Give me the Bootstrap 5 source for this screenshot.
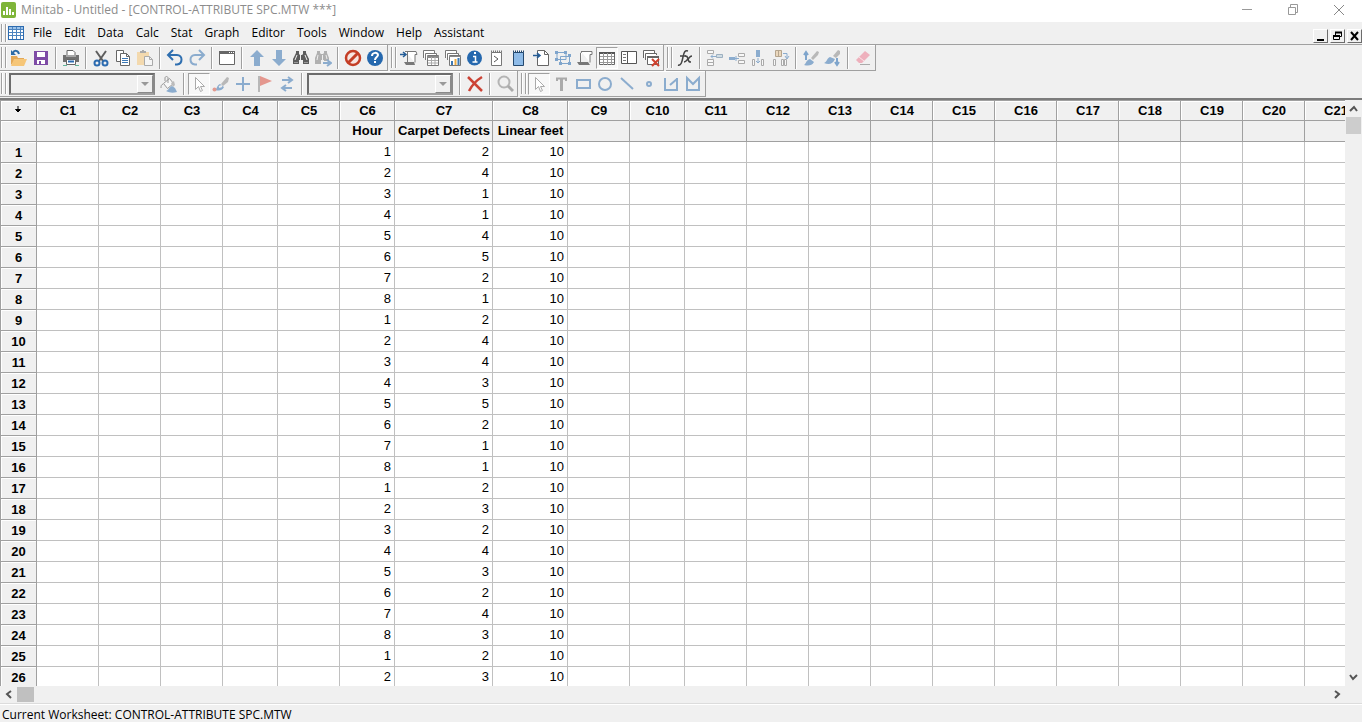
<!DOCTYPE html>
<html lang="en">
<head>
<meta charset="utf-8">
<meta name="viewport" content="width=device-width, initial-scale=1">
<title>Minitab - Untitled</title>
<link href="https://cdn.jsdelivr.net/npm/bootstrap@5.3.0/dist/css/bootstrap.min.css" rel="stylesheet">
<script src="https://cdn.jsdelivr.net/npm/bootstrap@5.3.0/dist/js/bootstrap.bundle.min.js"></script>
<style>
:root{--face:#f0f0f0;--edge:#a0a0a0}
body{font-family:"Open Sans","Noto Sans",sans-serif;font-size:12px;line-height:16px;color:#000;background:var(--face)}
button{border:0;padding:0;background:none;color:inherit}
svg{display:block;fill:none}
.titlebar{height:22px;background:#fff;color:#8c8c8c;padding-bottom:2px}
.wincap{width:46px;height:18px}
.menubar{height:23px;border-bottom:1px solid var(--edge)}
.menubar .menu-item{color:#000;text-decoration:none;padding:0 6px}
.child-btns{gap:2px;padding-bottom:1px}
.grip{width:8px;align-self:stretch;flex:none;padding:2px 0 2px 1px;gap:2px}
.grip i{width:2px;border-left:1px solid var(--edge);background:#fff}
.tool-group{height:26px;border-right:1px solid var(--edge);border-bottom:1px solid var(--edge);padding-right:1px;box-shadow:inset 0 1px #fff}
.tool{width:22px;height:22px;flex:none;display:flex;align-items:center;justify-content:center}
.tool.pressed{background:#f8f8f8;border:1px solid;border-color:var(--edge) #fff #fff var(--edge)}
.divider{width:8px;height:22px;flex:none;padding-left:3px}
.divider::before{content:"";display:block;width:2px;height:100%;background:var(--edge);border-right:1px solid #fff}
.combo{width:146px;height:22px;margin:0 3px 0 1px;position:relative;flex:none}
.combo select{appearance:none;width:100%;height:100%;background:var(--face);border:2px solid;border-color:#6c6c6c #8a8a8a #a0a0a0 #6c6c6c;border-radius:0}
.combo span{position:absolute;right:2px;top:2px;bottom:2px;width:16px;border:1px solid;border-color:#fff #8a8a8a #8a8a8a #fff;pointer-events:none;display:flex;align-items:center;justify-content:center}
.child-btn{width:15px;height:14px;background:var(--face);border:1px solid;border-color:#fff #6c6c6c #6c6c6c #fff;display:flex;align-items:center;justify-content:center}
.sheet-frame{border-top:2px solid #7c7c7c;margin-top:1px;min-height:0}
.sheet-view{overflow:hidden;background:#fff;min-width:0}
.sheet{table-layout:fixed;width:0;border-collapse:separate;border-spacing:0;font:13px/18px "Liberation Sans",Arial,sans-serif}
.sheet col{width:62px}.sheet col.row-no{width:37px}.sheet col.w55{width:55px}.sheet col.w98{width:98px}.sheet col.w75{width:75px}
.sheet th,.sheet td{height:21px;padding:0 3px;border:0 solid #c0c0c0;border-width:0 1px 1px 0;text-align:right;white-space:nowrap;overflow:hidden}
.sheet th{background:var(--face);border-color:var(--edge);text-align:center;padding:0 0 0 1px}
.sheet th.num{border-left-width:1px;box-shadow:inset 1px 1px #fff;padding:1px 0 0}
.sheet thead tr:first-child th{border-top-width:1px;box-shadow:inset 1px 1px #fff}
.sheet thead tr:first-child th.num{padding:0 2px 2px 0}
.vbar{width:17px;flex:none}
.vbar .thumb{width:15px;height:17px;background:#cdcdcd}
.hbar{height:17px;flex:none}
.hbar .thumb{width:17px;height:15px;background:#c0c0c0}
.arrow-btn{width:17px;height:17px;display:flex;align-items:center;justify-content:center}
.status{line-height:14px;border-top:1px solid #dcdcdc;box-shadow:inset 0 1px #fff;padding:4px 2px 0;flex:none;white-space:nowrap}
</style>
</head>
<body class="vh-100 d-flex flex-column overflow-hidden">
<header class="titlebar d-flex align-items-center flex-shrink-0">
  <svg width="17" height="16" viewBox="0 0 17 16" class="me-1"><rect x="1" width="15" height="16" rx="2" fill="#7fb539"/><path d="M4 9v4M7 5v8M10 7v6M13 10v3" stroke="#fff" stroke-width="2"/></svg>
  <span>Minitab - Untitled - [CONTROL-ATTRIBUTE SPC.MTW ***]</span>
  <div class="d-flex ms-auto">
    <button class="wincap d-flex align-items-center justify-content-center" aria-label="Minimize"><svg width="12" height="12"><path d="M1 5.500h10" stroke="#999"/></svg></button>
    <button class="wincap d-flex align-items-center justify-content-center" aria-label="Restore"><svg width="12" height="12"><path d="M1.500 3.500h7v7h-7zM3.500 3.500v-3h7v8h-2" stroke="#999"/></svg></button>
    <button class="wincap d-flex align-items-center justify-content-center" aria-label="Close"><svg width="12" height="12"><path d="M1 1l10 10M11 1L1 11" stroke="#888"/></svg></button>
  </div>
</header>

<nav class="menubar d-flex align-items-center flex-shrink-0">
  <div class="grip d-flex"><i></i><i></i></div>
  <svg width="17" height="16" viewBox="0 0 17 16" class="me-1"><rect x=".5" y="1.500" width="15" height="13" fill="#fff" stroke="#2c6bb0"/><path d="M1 2h14v2H1z" fill="#9cc3ea"/><path d="M1 4.500h14M1 7.500h14M1 10.500h14M4.500 2v12M8.500 2v12M12.500 2v12" stroke="#4d84bf"/></svg>
  <div class="d-flex">
    <a class="menu-item ps-1" href="#">File</a><a class="menu-item" href="#">Edit</a><a class="menu-item" href="#">Data</a><a class="menu-item" href="#">Calc</a><a class="menu-item" href="#">Stat</a><a class="menu-item" href="#">Graph</a><a class="menu-item" href="#">Editor</a><a class="menu-item" href="#">Tools</a><a class="menu-item" href="#">Window</a><a class="menu-item" href="#">Help</a><a class="menu-item" href="#">Assistant</a>
  </div>
  <div class="child-btns d-flex ms-auto align-self-end">
    <button class="child-btn" aria-label="Minimize worksheet"><svg width="11" height="10"><path d="M2 9h7" stroke="#000" stroke-width="2"/></svg></button>
    <button class="child-btn" aria-label="Restore worksheet"><svg width="11" height="10"><path d="M3.500 4V1.500h6v4H8M1.500 4.500h6v4h-6z" stroke="#000"/><path d="M3 1.500h7M1 5h7" stroke="#000" stroke-width="2"/></svg></button>
    <button class="child-btn" aria-label="Close worksheet"><svg width="11" height="10"><path d="M2 1l7 8M9 1L2 9" stroke="#000" stroke-width="2"/></svg></button>
  </div>
</nav>

<div class="d-flex flex-shrink-0" style="gap:2px" role="toolbar" aria-label="Standard">
  <div class="tool-group d-flex align-items-center">
    <div class="grip d-flex"><i></i><i></i></div>
    <button class="tool" aria-label="Open"><svg width="18" height="18"><path d="M1 16V7h6l1 2h6v2H5z" fill="#e3a857"/><path d="M4 10h13l-3 7H1z" fill="#f6c678"/><path d="M3 4c1-3 5-3 6 1" stroke="#2c6ba5" stroke-width="2"/><path d="M1 1v5h5z" fill="#2c6ba5"/></svg></button>
    <button class="tool" aria-label="Save"><svg width="18" height="18"><path d="M2 2h14v14H2z" fill="#7e4ba6"/><path d="M5 3h8v5H5zM5 11h8v4H5z" fill="#fff"/><path d="M7 12h2v3H7z" fill="#7e4ba6"/></svg></button>
    <span class="divider"></span>
    <button class="tool" aria-label="Print"><svg width="18" height="18"><path d="M5 6V1.500h6l2 2V6" fill="#fff" stroke="#666"/><path d="M1 6h16v7H1z" fill="#707070"/><path d="M4 7h10" stroke="#ddd"/><path d="M4.500 10.500h9v5h-9z" fill="#fff" stroke="#666"/><path d="M6 12.500h6" stroke="#2c6bb0" stroke-width="2"/><path d="M1 16.500h4M13 16.500h4" stroke="#63b59a"/></svg></button>
    <span class="divider"></span>
    <button class="tool" aria-label="Cut"><svg width="18" height="18"><path d="M4 2l7 10M14 2L7 12" stroke="#5e5e5e" stroke-width="2"/><circle cx="5" cy="14" r="2.500" stroke="#2c6bb0" stroke-width="2"/><circle cx="13" cy="14" r="2.500" stroke="#2c6bb0" stroke-width="2"/></svg></button>
    <button class="tool" aria-label="Copy"><svg width="18" height="18"><path d="M2.500 1.500h7v11h-7z" fill="#fff" stroke="#666"/><path d="M6.500 4.500h6l3 3v9h-9z" fill="#fff" stroke="#666"/><path d="M12.500 4.500v3h3" stroke="#666"/><path d="M8 9.500h6M8 11.500h6M8 13.500h6" stroke="#3b78b5"/></svg></button>
    <button class="tool" aria-label="Paste"><svg width="18" height="18"><path d="M1 3h12v13H1z" fill="#f3d9ae"/><path d="M4 4V2h2V1h2v1h2v2z" fill="#aaa"/><path d="M8.500 7.500h5l3 3v6h-8z" fill="#f5f5f5" stroke="#aaa"/><path d="M13.500 7.500v3h3" stroke="#aaa"/></svg></button>
    <span class="divider"></span>
    <button class="tool" aria-label="Undo"><svg width="18" height="18"><path d="M3 6h8c6 0 6 9 0 9.500H9" stroke="#2f6fb0" stroke-width="2"/><path d="M7 1L2 6l5 5" stroke="#2f6fb0" stroke-width="2"/></svg></button>
    <button class="tool" aria-label="Redo"><svg width="18" height="18"><path d="M15 6H7c-6 0-6 9 0 9.500h2" stroke="#8bacce" stroke-width="2"/><path d="M11 1l5 5-5 5" stroke="#8bacce" stroke-width="2"/></svg></button>
    <span class="divider"></span>
    <button class="tool" aria-label="Edit last dialog"><svg width="18" height="18"><path d="M1.500 2.500h15v13h-15z" fill="#fff" stroke="#666"/><path d="M1 3.500h16" stroke="#666" stroke-width="3"/><path d="M11 3.500h1M13 3.500h1M15 3.500h1" stroke="#fff"/></svg></button>
    <span class="divider"></span>
    <button class="tool" aria-label="Previous"><svg width="18" height="18"><path d="M9 1l7 7h-4v9H6V8H2z" fill="#8bacce"/></svg></button>
    <button class="tool" aria-label="Next"><svg width="18" height="18"><path d="M9 17l7-7h-4V1H6v9H2z" fill="#8bacce"/></svg></button>
    <button class="tool" aria-label="Find"><svg width="18" height="18"><path d="M4 2h3v3l1 1h2l1-1V2h3v2l3 6v5h-6v-4H7v4H1v-5l3-6z" fill="#5c5c5c"/><path d="M5 6l-2 5M8.500 6v5M13 6l2 5" stroke="#eee"/><path d="M2 13.500h4M12 13.500h4" stroke="#999"/></svg></button>
    <button class="tool" aria-label="Find next"><svg width="18" height="18"><path d="M3 2h3v2l1 1h2l1-1V2h3v2l2 5v3h-5v-1H7v4H1V9l2-5z" fill="#b0b0b0"/><path d="M4 6l-1 5M8.500 6v5M12 6l1 4" stroke="#eee"/><path d="M9 14h7M13 11l4 3-4 3" stroke="#8bacce" stroke-width="2"/></svg></button>
    <span class="divider"></span>
    <button class="tool" aria-label="Cancel"><svg width="18" height="18"><circle cx="9" cy="9" r="7" stroke="#c43d25" stroke-width="2.500" fill="#f7e4df"/><path d="M4 14L14 4" stroke="#c43d25" stroke-width="3"/></svg></button>
    <button class="tool" aria-label="Help"><svg width="18" height="18"><circle cx="9" cy="9" r="8" fill="#2568ae"/><path d="M6 7c0-4 6-4 6-1 0 2-3 2-3 5" stroke="#fff" stroke-width="2"/><path d="M8 12h2v2H8z" fill="#fff"/></svg></button>
  </div>
  <div class="tool-group d-flex align-items-center">
    <div class="grip d-flex"><i></i><i></i></div>
    <button class="tool" aria-label="Show session"><svg width="18" height="18"><path d="M5 2.500h11l1 3h-2v8M7.500 3v10" fill="#fff" stroke="#777"/><path d="M4 13h10l1 3H6z" fill="#777"/><path d="M0 5.500h5M3 3l3 2.500L3 8" stroke="#245c96" stroke-width="1.500"/></svg></button>
    <button class="tool" aria-label="Show worksheets"><svg width="18" height="18"><path d="M1.500 9V1.500h11V4M3.500 11V4.500h11V6" stroke="#777" fill="#fff"/><path d="M5.500 6.500h11v10h-11z" fill="#fff" stroke="#777"/><path d="M5 8h12" stroke="#888" stroke-width="2"/><path d="M6 11.500h10M6 14h10M9.500 8v8M13 8v8" stroke="#aaa"/></svg></button>
    <button class="tool" aria-label="Show graphs"><svg width="18" height="18"><path d="M1.500 9V1.500h11V4M3.500 11V4.500h11V6" stroke="#777" fill="#fff"/><path d="M5.500 6.500h11v10h-11z" fill="#fff" stroke="#777"/><path d="M5 7.500h12" stroke="#888"/><path d="M8 16v-4" stroke="#3b78b5" stroke-width="2"/><path d="M11.500 16v-6" stroke="#e8aa45" stroke-width="2"/><path d="M14.500 16V9" stroke="#3b78b5" stroke-width="2"/></svg></button>
    <button class="tool" aria-label="Info"><svg width="18" height="18"><circle cx="8.500" cy="9" r="7.500" fill="#2568ae"/><path d="M7 7.500h2.500V13M6.500 13h5" stroke="#fff" stroke-width="1.500"/><path d="M8 3h2v2H8z" fill="#fff"/></svg></button>
    <button class="tool" aria-label="History"><svg width="18" height="18"><path d="M3.500 3.500h10v13h-10z" fill="#fff" stroke="#777"/><path d="M3 2.500h11" stroke="#777" stroke-width="2" stroke-dasharray="1 1"/><path d="M6 7l4 3-4 3" stroke="#555"/></svg></button>
    <button class="tool" aria-label="Report pad"><svg width="18" height="18"><path d="M3.500 3.500h10v13h-10z" fill="#8ebbe8" stroke="#24496f"/><path d="M3 2.500h11" stroke="#24496f" stroke-width="2" stroke-dasharray="1 1"/></svg></button>
    <button class="tool" aria-label="Related documents"><svg width="18" height="18"><path d="M5.500 1.500h7l4 4v11h-11z" fill="#fff" stroke="#666"/><path d="M12.500 1.500v4h4" stroke="#666"/><path d="M1 6.500h7M5 4l3 2.500L5 9" stroke="#245c96" stroke-width="1.500"/></svg></button>
    <button class="tool" aria-label="Show design"><svg width="18" height="18"><path d="M3 3.500h9v7H3zM6.500 7.500h9v7h-9z" stroke="#7fa5cc"/><path d="M1 2h3v3H1zM10 2h3v3h-3zM1 9h3v3H1zM14 5h3v3h-3zM5 13h3v3H5zM14 13h3v3h-3z" fill="#7fa5cc"/></svg></button>
    <button class="tool" aria-label="Session window"><svg width="18" height="18"><path d="M5 2.500h11v3h-2v8M4.500 13V4l2-1.500" fill="#fff" stroke="#777"/><path d="M1 13h11l2 3H3z" fill="#777"/></svg></button>
    <button class="tool pressed" aria-label="Worksheet window" aria-pressed="true"><svg width="18" height="18"><path d="M1.500 3.500h15v12h-15z" fill="#fff" stroke="#666"/><path d="M1 4h16" stroke="#555" stroke-width="2"/><path d="M2 7.500h14M2 10.500h14M2 13.500h14M5.500 4v12M9.500 4v12M13.500 4v12" stroke="#999"/></svg></button>
    <button class="tool" aria-label="Project manager"><svg width="18" height="18"><path d="M1.500 2.500h15v12h-15z" fill="#fff" stroke="#555"/><path d="M7.500 3v11" stroke="#555"/><path d="M3 5.500h3M3 8.500h3M3 11.500h3" stroke="#777"/></svg></button>
    <button class="tool" aria-label="Close all graphs"><svg width="18" height="18"><path d="M1.500 9V1.500h11V4M3.500 11V4.500h11V6" stroke="#666" fill="#fff"/><path d="M5.500 7.500h11v8h-11z" fill="#fff" stroke="#666"/><path d="M5 8h12" stroke="#666" stroke-width="2"/><path d="M10 10l7 7M17 10l-7 7" stroke="#d0422f" stroke-width="2"/></svg></button>
  </div>
  <div class="tool-group d-flex align-items-center">
    <div class="grip d-flex"><i></i><i></i></div>
    <button class="tool" aria-label="Assign formula"><svg width="18" height="18"><path d="M2 16c3 1 4-3 5-8s2-7 5-6M4 7h6" stroke="#444" stroke-width="1.500"/><path d="M9 7c2 0 2 0 3 3s1 3 3 3M16 7c-2 0-3 2-4 3s-2 3-4 3" stroke="#444" stroke-width="1.500"/></svg></button>
    <span class="divider"></span>
    <button class="tool" aria-label="Insert cells"><svg width="18" height="18"><path d="M1.500 1.500h6v3h-6zM1.500 10.500h6v3h-6zM1.500 13.500h6v3h-6z" fill="#f8f8f8" stroke="#aaa"/><path d="M10.500 5.500h6v3h-6z" fill="#cfdce4" stroke="#9db0c0"/><path d="M5 7.500h5M7 5.500l-2 2 2 2" stroke="#8bacce"/></svg></button>
    <button class="tool" aria-label="Insert rows"><svg width="18" height="18"><path d="M1 8h6v3H1z" fill="#8bacce"/><path d="M7 9.500h4M8 7v5" stroke="#8bacce"/><path d="M10.500 4.500h6v3h-6zM10.500 11.500h6v3h-6z" fill="#f8f8f8" stroke="#aaa"/></svg></button>
    <button class="tool" aria-label="Insert columns"><svg width="18" height="18"><path d="M6 1h4v7H6z" fill="#8bacce"/><path d="M8 9v5M6 12l2 2 2-2" stroke="#8bacce"/><path d="M2.500 10.500h2v6h-2zM11.500 10.500h2v6h-2z" fill="#f8f8f8" stroke="#aaa"/></svg></button>
    <button class="tool" aria-label="Move columns"><svg width="18" height="18"><path d="M3.500 1.500h6v6h-6z" fill="#ead7bd" stroke="#b5a58e"/><path d="M6.500 2v6" stroke="#b5a58e"/><path d="M11 4.500h4V9M13 7l2 3 2-3" stroke="#8bacce"/><path d="M1.500 10.500h2v6h-2zM9.500 10.500h2v6h-2zM12.500 10.500h2v6h-2z" fill="#f8f8f8" stroke="#aaa"/></svg></button>
    <span class="divider"></span>
    <button class="tool" aria-label="Previous brushed row"><svg width="18" height="18"><path d="M4 4v7M2 6l2-3 2 3" stroke="#7fa5cc" stroke-width="2"/><path d="M9 9l6-7 2 1-1 3-5 5z" fill="#b8b8b8"/><path d="M2 16c2-1 2-5 6-6l4 3c-2 4-6 4-10 3z" fill="#8bacce"/></svg></button>
    <button class="tool" aria-label="Next brushed row"><svg width="18" height="18"><path d="M13 9v7M11 13l2 3 2-3" stroke="#7fa5cc" stroke-width="2"/><path d="M9 7l5-6 2 1v3l-4 4z" fill="#b8b8b8"/><path d="M0 14c3-1 3-5 6-6l5 2c-2 5-6 6-11 4z" fill="#8bacce"/></svg></button>
    <span class="divider"></span>
    <button class="tool" aria-label="Clear"><svg width="18" height="18"><path d="M3 10l8-8 5 4-8 8H5l-3-3z" fill="#eeb0bc"/><path d="M5 8l5 4" stroke="#fae4e8"/><path d="M6 15.500h10" stroke="#aaa"/></svg></button>
  </div>
</div>

<div class="d-flex flex-shrink-0" style="gap:2px" role="toolbar" aria-label="Graph editing">
  <div class="tool-group d-flex align-items-center">
    <div class="grip d-flex"><i></i><i></i></div>
    <div class="combo"><select aria-label="Graph item"><option></option></select><span><svg width="8" height="4"><path d="M0 0h8L4 4z" fill="#999"/></svg></span></div>
    <button class="tool" aria-label="Edit attributes"><svg width="18" height="18"><path d="M3.500 8.500l6-5 4 5-6 5z" fill="#f8f8f8" stroke="#999"/><path d="M5 6V3c0-2 3-2 3 0v5M3 9c-2 1-2 2-2 4" stroke="#999"/><path d="M11 8l3-2 1 4-2 2z" fill="#bbb"/><path d="M6 16c2 0 3-4 6-5l3 2 2 4c-4 1-7 1-11-1z" fill="#8bacce"/></svg></button>
    <span class="divider"></span>
    <button class="tool pressed" aria-label="Select" aria-pressed="true"><svg width="18" height="18"><path d="M5.500 2.500v12l3-3 2 5 2-1-2-4h4z" fill="#fff" stroke="#aaa"/></svg></button>
    <button class="tool" aria-label="Brush"><svg width="18" height="18"><path d="M9 9l6-7 2 1-1 4-5 4z" fill="#b8b8b8"/><path d="M3 15c2-1 2-5 5-6l4 3c-2 4-5 4-9 3z" fill="#8bacce"/><path d="M7 12l3-1" stroke="#eee" stroke-width="2"/><circle cx="2.500" cy="14.500" r="2" fill="#e29a90"/></svg></button>
    <button class="tool" aria-label="Crosshairs"><svg width="18" height="18"><path d="M9 2v14M2 9h14" stroke="#8bacce" stroke-width="2"/></svg></button>
    <button class="tool" aria-label="Flag"><svg width="18" height="18"><path d="M3 1v16" stroke="#b8b8b8" stroke-width="2"/><path d="M4 1l12 5-12 5z" fill="#e4978e"/></svg></button>
    <button class="tool" aria-label="Swap"><svg width="18" height="18"><path d="M4 5h9M14 13H5M10 2l4 3-4 3M8 10l-4 3 4 3" stroke="#8bacce" stroke-width="2"/></svg></button>
    <span class="divider"></span>
    <div class="combo"><select aria-label="Item style"><option></option></select><span><svg width="8" height="4"><path d="M0 0h8L4 4z" fill="#999"/></svg></span></div>
    <span class="divider"></span>
    <button class="tool" aria-label="Delete"><svg width="18" height="18"><path d="M2 2l14 14M16 2c-5 3-10 8-13 14" stroke="#cc4335" stroke-width="2.500"/></svg></button>
    <span class="divider"></span>
    <button class="tool" aria-label="Zoom"><svg width="18" height="18"><circle cx="8" cy="7" r="5.500" stroke="#b4b4b4" stroke-width="2"/><path d="M12 11l5 5" stroke="#aaa" stroke-width="3"/></svg></button>
  </div>
  <div class="tool-group d-flex align-items-center">
    <div class="grip d-flex"><i></i><i></i></div>
    <button class="tool pressed" aria-label="Select annotation" aria-pressed="true"><svg width="18" height="18"><path d="M5.500 2.500v12l3-3 2 5 2-1-2-4h4z" fill="#fff" stroke="#aaa"/></svg></button>
    <button class="tool" aria-label="Text"><svg width="18" height="18"><path d="M5 6V3.500h9V6" stroke="#aaa" stroke-width="2"/><path d="M9.500 3v13" stroke="#aaa" stroke-width="3"/></svg></button>
    <button class="tool" aria-label="Rectangle"><svg width="18" height="18"><path d="M3 5h13v8H3z" stroke="#8bacce" stroke-width="2"/></svg></button>
    <button class="tool" aria-label="Ellipse"><svg width="18" height="18"><circle cx="9" cy="9" r="6" stroke="#8bacce" stroke-width="2"/></svg></button>
    <button class="tool" aria-label="Line"><svg width="18" height="18"><path d="M3 3l12 11" stroke="#8bacce" stroke-width="2"/></svg></button>
    <button class="tool" aria-label="Marker"><svg width="18" height="18"><circle cx="9" cy="9" r="2" stroke="#8bacce" stroke-width="2"/></svg></button>
    <button class="tool" aria-label="Polyline"><svg width="18" height="18"><path d="M3 3v12h12V3M15 4l-7 6" stroke="#8bacce" stroke-width="2"/></svg></button>
    <button class="tool" aria-label="Polygon"><svg width="18" height="18"><path d="M3 3v12h12V3L9 9z" stroke="#8bacce" stroke-width="2"/></svg></button>
  </div>
</div>

<main class="sheet-frame d-flex flex-grow-1">
  <div class="sheet-view flex-grow-1">
    <table class="sheet">
      <colgroup id="cols"></colgroup>
      <thead id="head"></thead>
      <tbody id="rows"></tbody>
    </table>
  </div>
  <div class="vbar d-flex flex-column align-items-center">
    <button class="arrow-btn" aria-label="Scroll up"><svg width="9" height="7"><path d="M1 6l4-4 3 4" stroke="#555" stroke-width="2"/></svg></button>
    <div class="thumb"></div>
    <button class="arrow-btn mt-auto" aria-label="Scroll down"><svg width="9" height="7"><path d="M1 1l3 4 4-4" stroke="#555" stroke-width="2"/></svg></button>
  </div>
</main>
<div class="hbar d-flex align-items-center">
  <button class="arrow-btn" aria-label="Scroll left"><svg width="7" height="9"><path d="M6 1L2 4l4 4" stroke="#555" stroke-width="2"/></svg></button>
  <div class="thumb"></div>
  <button class="arrow-btn ms-auto me-3" aria-label="Scroll right"><svg width="7" height="9"><path d="M1 1l4 3-4 4" stroke="#555" stroke-width="2"/></svg></button>
</div>
<footer class="status">Current Worksheet: CONTROL-ATTRIBUTE SPC.MTW</footer>

<script>
// Worksheet contents: C6 cycles through the hours, C8 is constant.
const names = {6: 'Hour', 7: 'Carpet Defects', 8: 'Linear feet'};
const defects = [2,4,1,1,4,5,2,1,2,4,4,3,5,2,1,1,2,3,2,4,3,2,4,3,2,3];
const widths = {4: 'w55', 6: 'w55', 7: 'w98', 8: 'w75', 10: 'w55'};
const columns = Array.from({length: 21}, (_, i) => i + 1);
const arrow = '<svg class="mx-auto" width="8" height="9"><path d="M4 1v6M1.500 4.500h5L4 7z" stroke="#000" fill="#000"/></svg>';
document.getElementById('cols').innerHTML = '<col class="row-no">' + columns.map(c => `<col class="${widths[c] || ''}">`).join('');
document.getElementById('head').innerHTML =
  `<tr><th class="num" aria-label="Entry direction">${arrow}</th>${columns.map(c => `<th>C${c}</th>`).join('')}</tr>` +
  `<tr><th class="num"></th>${columns.map(c => `<th>${names[c] || ''}</th>`).join('')}</tr>`;
document.getElementById('rows').innerHTML = defects.map((d, i) => {
  const values = {6: i % 8 + 1, 7: d, 8: 10};
  return `<tr><th class="num">${i + 1}</th>${columns.map(c => `<td>${values[c] ?? ''}</td>`).join('')}</tr>`;
}).join('');
</script>
</body>
</html>
